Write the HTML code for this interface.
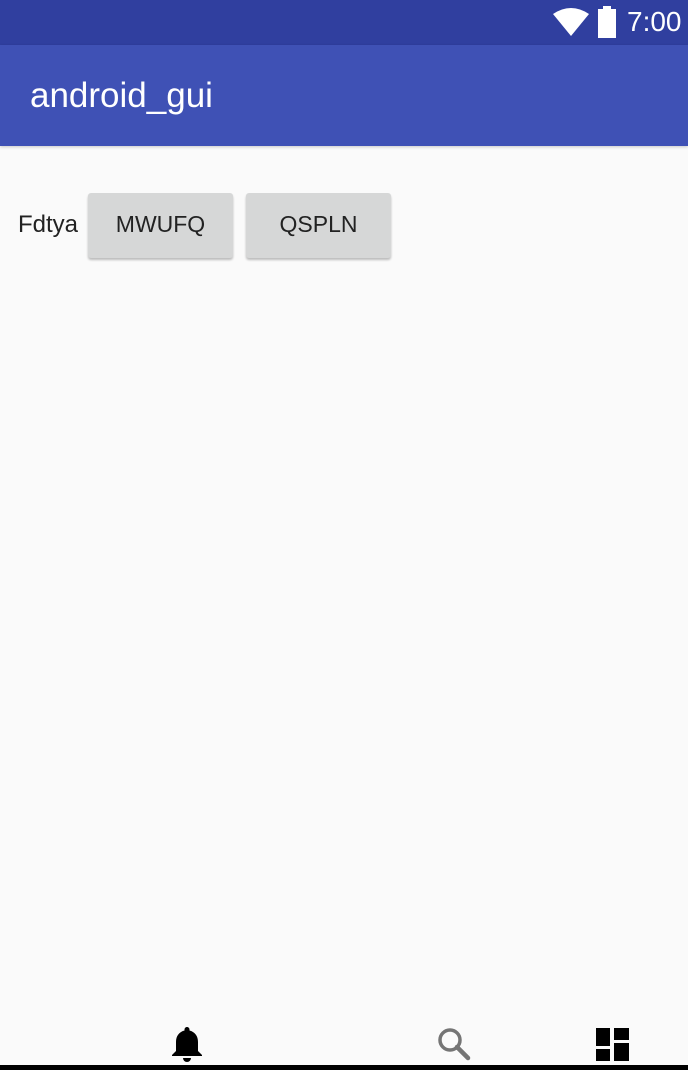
<!DOCTYPE html>
<html><head><meta charset="utf-8"><style>
*{margin:0;padding:0;box-sizing:border-box}
body{width:688px;height:1070px;background:#fafafa;font-family:"Liberation Sans",sans-serif;position:relative;overflow:hidden}
.sb{position:absolute;left:0;top:0;width:688px;height:45px;background:#303f9f}
.ab{position:absolute;left:0;top:45px;width:688px;height:101px;background:#3f51b5;box-shadow:0 1px 3px rgba(0,0,0,.2)}
.title{position:absolute;left:30px;top:76px;color:#fff;font-size:35px}
.time{position:absolute;left:627px;top:6px;color:#fff;font-size:28px}
.lbl{position:absolute;left:18px;top:211px;font-size:24px;color:#222}
.btn{position:absolute;top:193px;width:145px;height:65px;background:#d6d7d7;border-radius:3px;box-shadow:0 2px 2px rgba(0,0,0,.25);font-size:23px;color:#222;text-align:center;line-height:63px}
.bar{position:absolute;left:0;top:1065px;width:688px;height:5px;background:#000}
</style></head><body>
<div class="sb"></div>
<svg style="position:absolute;left:553px;top:8px" width="36" height="28" viewBox="0 0 36 28"><path d="M0 6 Q18 -6 36 6 L18 28 Z" fill="#fff"/></svg>
<div style="position:absolute;left:598px;top:9px;width:18px;height:29px;background:#fff"></div>
<div style="position:absolute;left:603px;top:6px;width:8px;height:4px;background:#fff"></div>
<div class="time">7:00</div>
<div class="ab"></div>
<div class="title">android_gui</div>
<div class="lbl">Fdtya</div>
<div class="btn" style="left:88px">MWUFQ</div>
<div class="btn" style="left:246px">QSPLN</div>
<svg style="position:absolute;left:171px;top:1026px" width="32" height="36" viewBox="0 0 32 36"><path d="M16 1 a2.5 2.5 0 0 1 2.5 2.5 v1 C24 6 27 10 27 16 v9 l4 4 v1 H1 v-1 l4 -4 v-9 C5 10 8 6 13.5 4.5 v-1 A2.5 2.5 0 0 1 16 1Z M12 32 h8 a4 4 0 0 1 -8 0Z" fill="#000"/></svg>
<svg style="position:absolute;left:437px;top:1027px" width="34" height="34" viewBox="0 0 34 34"><circle cx="13" cy="13" r="10" fill="none" stroke="#757575" stroke-width="3.5"/><path d="M20 20 L31 31" stroke="#757575" stroke-width="4.5" stroke-linecap="round"/></svg>
<svg style="position:absolute;left:596px;top:1028px" width="33" height="33" viewBox="0 0 33 33" fill="#000"><rect x="0" y="0" width="14" height="18"/><rect x="0" y="21" width="14" height="12"/><rect x="18" y="0" width="15" height="12"/><rect x="18" y="15" width="15" height="18"/></svg>
<div class="bar"></div>
</body></html>
